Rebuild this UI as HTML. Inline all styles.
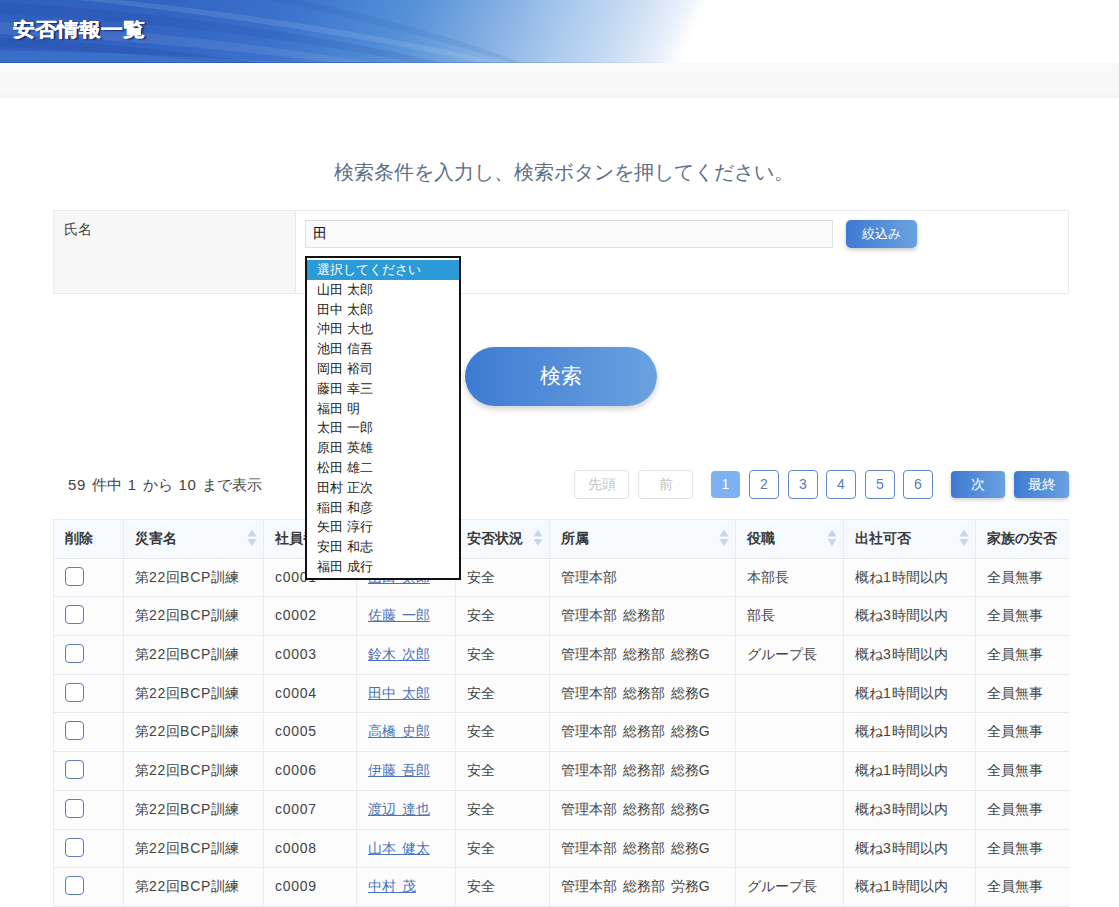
<!DOCTYPE html>
<html><head><meta charset="utf-8">
<style>
*{margin:0;padding:0;box-sizing:border-box}
html,body{width:1119px;height:907px;overflow:hidden;background:#fff}
body{font-family:"Liberation Sans",sans-serif;color:#333;position:relative}
.abs{position:absolute}
#hdr{left:0;top:0;width:1119px;height:63px;overflow:hidden;
 background:linear-gradient(100deg,#3463c2 0px,#3a6fcc 250px,#5a90d8 420px,#9fc0e8 560px,#d6e5f6 650px,#fff 720px)}
#hdr h1{position:absolute;left:13px;top:16px;transform:scale(1,0.87);transform-origin:0 4px;-webkit-text-stroke:0.35px #fff;font-size:22px;font-weight:bold;color:#fff;letter-spacing:0px;
 text-shadow:2px 2px 2px rgba(0,10,60,.75)}
#gray{left:0;top:63px;width:1119px;height:35px;background:linear-gradient(#f9f9f9,#f8f8f8 85%,#f3f3f3)}
#msg{left:0;top:158px;width:1128px;text-align:center;font-size:19.5px;color:#5d6f88;line-height:28px;white-space:nowrap}
#form{left:53px;top:210px;width:1016px;height:84px;border:1px solid #ececec;background:#fff}
#lbl{left:0;top:0;width:242px;height:82px;background:#f7f7f7;border-right:1px solid #ececec}
#lbl span{position:absolute;left:10px;top:10px;font-size:14px;color:#444}
#inp{left:305px;top:220px;width:528px;height:28px;background:#fafafa;border:1px solid #e2e2e2;border-top-color:#d6d6d6}
#inp span{position:absolute;left:7px;top:4px;font-size:14px;color:#111}
.bbtn{background:linear-gradient(90deg,#3e7ad2,#6aa2e0);color:#fff;text-align:center;box-shadow:0 2px 4px rgba(0,0,0,.22)}
#shibori{left:846px;top:220px;width:71px;height:28px;border-radius:5px;font-size:13px;line-height:28px}
#search{left:465px;top:347px;width:192px;height:59px;border-radius:30px;font-size:21px;line-height:57px;box-shadow:0 3px 6px rgba(0,0,0,.18)}
#list{left:305px;top:256px;width:156px;height:324px;border:2px solid #111;background:#fff;overflow:hidden}
#list div{position:absolute;left:0;width:152px;height:19.8px;font-size:13px;line-height:19.8px;padding-left:10px;color:#222;white-space:nowrap}
#list div.sel{background:#2a9bd6;color:#fff}
#count{left:68px;top:474px;font-size:15px;color:#444;line-height:22px;white-space:nowrap;word-spacing:1.6px}
.pb{top:470px;height:29px;border-radius:4px;text-align:center;font-size:14px;line-height:27px}
.pd{border:1px solid #e3e3e3;color:#c4c4c4;width:55px}
.pn{border:1px solid #6389c8;color:#5a7db5;width:30px}
.pa{background:#7db1f4;color:#fff;width:29px;top:471px;height:27px;line-height:27px}
.pg{background:linear-gradient(90deg,#3e7ad2,#6aa2e0);color:#fff;width:54px;top:471px;height:27px;line-height:27px;box-shadow:0 2px 4px rgba(0,0,0,.2)}
#tbl{left:53px;top:519px;width:1016px;height:400px;overflow:hidden}
.hl{position:absolute;left:0;width:1100px;height:1px;background:#e6e9ee}
.vl{position:absolute;top:0;width:1px;height:400px;background:#e9ebef}
.th{position:absolute;top:0;height:39px;line-height:39px;font-size:14px;font-weight:bold;color:#3a3a3a;white-space:nowrap}
.td{position:absolute;font-size:14px;color:#444;white-space:nowrap;word-spacing:2px}
.td a{color:#4a74ba;text-decoration:underline}
.sort{position:absolute}
.l{letter-spacing:0.75px}
.cb{position:absolute;width:19px;height:19px;border:1.5px solid #5a7ec0;border-radius:4px;background:#fff}
</style></head><body>
<div id="hdr" class="abs"><svg width="1119" height="63" style="position:absolute;left:0;top:0">
<defs><linearGradient id="hg" gradientUnits="userSpaceOnUse" x1="42" y1="-190" x2="1077" y2="252">
<stop offset="0" stop-color="#2f5ebe"/><stop offset="0.17" stop-color="#3364c3"/><stop offset="0.27" stop-color="#3b72cc"/><stop offset="0.37" stop-color="#5590d8"/><stop offset="0.435" stop-color="#7eabe1"/><stop offset="0.50" stop-color="#a9c9ed"/><stop offset="0.55" stop-color="#c8dcf2"/><stop offset="0.59" stop-color="#e8f0fa"/><stop offset="0.61" stop-color="#ffffff"/><stop offset="1" stop-color="#ffffff"/></linearGradient></defs>
<rect width="1119" height="63" fill="url(#hg)"/>
<path d="M120 0 Q330 22 500 62 L478 62 Q310 26 80 0Z" fill="#ffffff" opacity="0.10"/>
<path d="M0 2 Q250 18 440 62 L410 62 Q230 26 0 14Z" fill="#102a80" opacity="0.10"/>
<path d="M0 22 Q200 34 370 62 L330 62 Q170 42 0 34Z" fill="#ffffff" opacity="0.08"/>
<path d="M0 50 Q160 54 300 63 L0 63Z" fill="#5aa0f0" opacity="0.22"/><path d="M0 38 Q140 44 260 63 L220 63 Q110 50 0 47Z" fill="#0a2070" opacity="0.10"/>
<path d="M300 0 Q420 25 520 62 L510 62 Q400 28 270 0Z" fill="#1a4aa0" opacity="0.10"/>
<defs><linearGradient id="lg"><stop offset="0" stop-color="#2a4c98" stop-opacity=".55"/><stop offset=".55" stop-color="#2a4c98" stop-opacity=".4"/><stop offset="1" stop-color="#2a4c98" stop-opacity="0"/></linearGradient></defs><rect y="62" width="680" height="1" fill="url(#lg)"/>
</svg><h1>安否情報一覧</h1></div>
<div id="gray" class="abs"></div>
<div id="msg" class="abs">検索条件を入力し、検索ボタンを押してください。</div>
<div id="form" class="abs"><div id="lbl" class="abs"><span>氏名</span></div></div>
<div id="inp" class="abs"><span>田</span></div>
<div id="shibori" class="abs bbtn">絞込み</div>
<div id="search" class="abs bbtn">検索</div>
<div id="count" class="abs"><span class="l">59</span> 件中 <span class="l">1</span> から <span class="l">10</span> まで表示</div>
<div class="abs pb pd" style="left:574px">先頭</div>
<div class="abs pb pd" style="left:638px">前</div>
<div class="abs pb pa" style="left:711px">1</div>
<div class="abs pb pn" style="left:749px">2</div>
<div class="abs pb pn" style="left:788px">3</div>
<div class="abs pb pn" style="left:826px">4</div>
<div class="abs pb pn" style="left:865px">5</div>
<div class="abs pb pn" style="left:903px">6</div>
<div class="abs pb pg" style="left:951px">次</div>
<div class="abs pb pg" style="left:1014px;width:55px">最終</div>
<div id="tbl" class="abs">
<div style="position:absolute;left:0;top:0;width:1100px;height:39px;background:#f6f9fd"></div>
<div style="position:absolute;left:0;top:39px;width:1100px;height:400px;background:#fcfcfc"></div>
<div class="hl" style="top:0"></div>
<div class="hl" style="top:39px"></div>
<div class="hl" style="top:77px"></div>
<div class="hl" style="top:116px"></div>
<div class="hl" style="top:155px"></div>
<div class="hl" style="top:193px"></div>
<div class="hl" style="top:232px"></div>
<div class="hl" style="top:271px"></div>
<div class="hl" style="top:310px"></div>
<div class="hl" style="top:348px"></div>
<div class="hl" style="top:387px"></div>
<div class="hl" style="top:426px"></div>
<div class="vl" style="left:0.0px"></div>
<div class="vl" style="left:70.0px"></div>
<div class="vl" style="left:210.0px"></div>
<div class="vl" style="left:303.0px"></div>
<div class="vl" style="left:402.0px"></div>
<div class="vl" style="left:496.0px"></div>
<div class="vl" style="left:682.0px"></div>
<div class="vl" style="left:790.0px"></div>
<div class="vl" style="left:922.0px"></div>
<div class="th" style="left:12.0px">削除</div>
<div class="th" style="left:82.0px">災害名</div>
<svg class="sort" style="left:194px;top:10px" width="10" height="18" viewBox="0 0 10 18"><path d="M5 0.5L9.5 7.5H0.5Z" fill="#c6d5ea"/><path d="M5 17L9.5 10H0.5Z" fill="#c6d5ea"/></svg>
<div class="th" style="left:222.0px">社員番号</div>
<svg class="sort" style="left:287px;top:10px" width="10" height="18" viewBox="0 0 10 18"><path d="M5 0.5L9.5 7.5H0.5Z" fill="#c6d5ea"/><path d="M5 17L9.5 10H0.5Z" fill="#c6d5ea"/></svg>
<div class="th" style="left:315.0px">氏名</div>
<svg class="sort" style="left:386px;top:10px" width="10" height="18" viewBox="0 0 10 18"><path d="M5 0.5L9.5 7.5H0.5Z" fill="#c6d5ea"/><path d="M5 17L9.5 10H0.5Z" fill="#c6d5ea"/></svg>
<div class="th" style="left:414.0px">安否状況</div>
<svg class="sort" style="left:480px;top:10px" width="10" height="18" viewBox="0 0 10 18"><path d="M5 0.5L9.5 7.5H0.5Z" fill="#c6d5ea"/><path d="M5 17L9.5 10H0.5Z" fill="#c6d5ea"/></svg>
<div class="th" style="left:508.0px">所属</div>
<svg class="sort" style="left:666px;top:10px" width="10" height="18" viewBox="0 0 10 18"><path d="M5 0.5L9.5 7.5H0.5Z" fill="#c6d5ea"/><path d="M5 17L9.5 10H0.5Z" fill="#c6d5ea"/></svg>
<div class="th" style="left:694.0px">役職</div>
<svg class="sort" style="left:774px;top:10px" width="10" height="18" viewBox="0 0 10 18"><path d="M5 0.5L9.5 7.5H0.5Z" fill="#c6d5ea"/><path d="M5 17L9.5 10H0.5Z" fill="#c6d5ea"/></svg>
<div class="th" style="left:802.0px">出社可否</div>
<svg class="sort" style="left:906px;top:10px" width="10" height="18" viewBox="0 0 10 18"><path d="M5 0.5L9.5 7.5H0.5Z" fill="#c6d5ea"/><path d="M5 17L9.5 10H0.5Z" fill="#c6d5ea"/></svg>
<div class="th" style="left:934.0px">家族の安否</div>
<svg class="sort" style="left:1031px;top:10px" width="10" height="18" viewBox="0 0 10 18"><path d="M5 0.5L9.5 7.5H0.5Z" fill="#c6d5ea"/><path d="M5 17L9.5 10H0.5Z" fill="#c6d5ea"/></svg>
<div class="cb" style="left:12.0px;top:47.50px"></div>
<div class="td" style="left:82.0px;top:39.00px;line-height:38px">第<span class="l">22</span>回<span class="l">BCP</span>訓練</div>
<div class="td" style="left:222.0px;top:39.00px;line-height:38px"><span class="l">c0001</span></div>
<div class="td" style="left:315.0px;top:39.00px;line-height:38px"><a>山田 太郎</a></div>
<div class="td" style="left:414.0px;top:39.00px;line-height:38px">安全</div>
<div class="td" style="left:508.0px;top:39.00px;line-height:38px">管理本部</div>
<div class="td" style="left:694.0px;top:39.00px;line-height:38px">本部長</div>
<div class="td" style="left:802.0px;top:39.00px;line-height:38px">概ね<span class="l">1</span>時間以内</div>
<div class="td" style="left:934.0px;top:39.00px;line-height:38px">全員無事</div>
<div class="cb" style="left:12.0px;top:85.50px"></div>
<div class="td" style="left:82.0px;top:77.00px;line-height:39px">第<span class="l">22</span>回<span class="l">BCP</span>訓練</div>
<div class="td" style="left:222.0px;top:77.00px;line-height:39px"><span class="l">c0002</span></div>
<div class="td" style="left:315.0px;top:77.00px;line-height:39px"><a>佐藤 一郎</a></div>
<div class="td" style="left:414.0px;top:77.00px;line-height:39px">安全</div>
<div class="td" style="left:508.0px;top:77.00px;line-height:39px">管理本部 総務部</div>
<div class="td" style="left:694.0px;top:77.00px;line-height:39px">部長</div>
<div class="td" style="left:802.0px;top:77.00px;line-height:39px">概ね<span class="l">3</span>時間以内</div>
<div class="td" style="left:934.0px;top:77.00px;line-height:39px">全員無事</div>
<div class="cb" style="left:12.0px;top:124.50px"></div>
<div class="td" style="left:82.0px;top:116.00px;line-height:39px">第<span class="l">22</span>回<span class="l">BCP</span>訓練</div>
<div class="td" style="left:222.0px;top:116.00px;line-height:39px"><span class="l">c0003</span></div>
<div class="td" style="left:315.0px;top:116.00px;line-height:39px"><a>鈴木 次郎</a></div>
<div class="td" style="left:414.0px;top:116.00px;line-height:39px">安全</div>
<div class="td" style="left:508.0px;top:116.00px;line-height:39px">管理本部 総務部 総務<span class="l">G</span></div>
<div class="td" style="left:694.0px;top:116.00px;line-height:39px">グループ長</div>
<div class="td" style="left:802.0px;top:116.00px;line-height:39px">概ね<span class="l">3</span>時間以内</div>
<div class="td" style="left:934.0px;top:116.00px;line-height:39px">全員無事</div>
<div class="cb" style="left:12.0px;top:163.50px"></div>
<div class="td" style="left:82.0px;top:155.00px;line-height:38px">第<span class="l">22</span>回<span class="l">BCP</span>訓練</div>
<div class="td" style="left:222.0px;top:155.00px;line-height:38px"><span class="l">c0004</span></div>
<div class="td" style="left:315.0px;top:155.00px;line-height:38px"><a>田中 太郎</a></div>
<div class="td" style="left:414.0px;top:155.00px;line-height:38px">安全</div>
<div class="td" style="left:508.0px;top:155.00px;line-height:38px">管理本部 総務部 総務<span class="l">G</span></div>
<div class="td" style="left:694.0px;top:155.00px;line-height:38px"></div>
<div class="td" style="left:802.0px;top:155.00px;line-height:38px">概ね<span class="l">1</span>時間以内</div>
<div class="td" style="left:934.0px;top:155.00px;line-height:38px">全員無事</div>
<div class="cb" style="left:12.0px;top:201.50px"></div>
<div class="td" style="left:82.0px;top:193.00px;line-height:39px">第<span class="l">22</span>回<span class="l">BCP</span>訓練</div>
<div class="td" style="left:222.0px;top:193.00px;line-height:39px"><span class="l">c0005</span></div>
<div class="td" style="left:315.0px;top:193.00px;line-height:39px"><a>高橋 史郎</a></div>
<div class="td" style="left:414.0px;top:193.00px;line-height:39px">安全</div>
<div class="td" style="left:508.0px;top:193.00px;line-height:39px">管理本部 総務部 総務<span class="l">G</span></div>
<div class="td" style="left:694.0px;top:193.00px;line-height:39px"></div>
<div class="td" style="left:802.0px;top:193.00px;line-height:39px">概ね<span class="l">1</span>時間以内</div>
<div class="td" style="left:934.0px;top:193.00px;line-height:39px">全員無事</div>
<div class="cb" style="left:12.0px;top:240.50px"></div>
<div class="td" style="left:82.0px;top:232.00px;line-height:39px">第<span class="l">22</span>回<span class="l">BCP</span>訓練</div>
<div class="td" style="left:222.0px;top:232.00px;line-height:39px"><span class="l">c0006</span></div>
<div class="td" style="left:315.0px;top:232.00px;line-height:39px"><a>伊藤 吾郎</a></div>
<div class="td" style="left:414.0px;top:232.00px;line-height:39px">安全</div>
<div class="td" style="left:508.0px;top:232.00px;line-height:39px">管理本部 総務部 総務<span class="l">G</span></div>
<div class="td" style="left:694.0px;top:232.00px;line-height:39px"></div>
<div class="td" style="left:802.0px;top:232.00px;line-height:39px">概ね<span class="l">1</span>時間以内</div>
<div class="td" style="left:934.0px;top:232.00px;line-height:39px">全員無事</div>
<div class="cb" style="left:12.0px;top:279.50px"></div>
<div class="td" style="left:82.0px;top:271.00px;line-height:39px">第<span class="l">22</span>回<span class="l">BCP</span>訓練</div>
<div class="td" style="left:222.0px;top:271.00px;line-height:39px"><span class="l">c0007</span></div>
<div class="td" style="left:315.0px;top:271.00px;line-height:39px"><a>渡辺 達也</a></div>
<div class="td" style="left:414.0px;top:271.00px;line-height:39px">安全</div>
<div class="td" style="left:508.0px;top:271.00px;line-height:39px">管理本部 総務部 総務<span class="l">G</span></div>
<div class="td" style="left:694.0px;top:271.00px;line-height:39px"></div>
<div class="td" style="left:802.0px;top:271.00px;line-height:39px">概ね<span class="l">3</span>時間以内</div>
<div class="td" style="left:934.0px;top:271.00px;line-height:39px">全員無事</div>
<div class="cb" style="left:12.0px;top:318.50px"></div>
<div class="td" style="left:82.0px;top:310.00px;line-height:38px">第<span class="l">22</span>回<span class="l">BCP</span>訓練</div>
<div class="td" style="left:222.0px;top:310.00px;line-height:38px"><span class="l">c0008</span></div>
<div class="td" style="left:315.0px;top:310.00px;line-height:38px"><a>山本 健太</a></div>
<div class="td" style="left:414.0px;top:310.00px;line-height:38px">安全</div>
<div class="td" style="left:508.0px;top:310.00px;line-height:38px">管理本部 総務部 総務<span class="l">G</span></div>
<div class="td" style="left:694.0px;top:310.00px;line-height:38px"></div>
<div class="td" style="left:802.0px;top:310.00px;line-height:38px">概ね<span class="l">3</span>時間以内</div>
<div class="td" style="left:934.0px;top:310.00px;line-height:38px">全員無事</div>
<div class="cb" style="left:12.0px;top:356.50px"></div>
<div class="td" style="left:82.0px;top:348.00px;line-height:39px">第<span class="l">22</span>回<span class="l">BCP</span>訓練</div>
<div class="td" style="left:222.0px;top:348.00px;line-height:39px"><span class="l">c0009</span></div>
<div class="td" style="left:315.0px;top:348.00px;line-height:39px"><a>中村 茂</a></div>
<div class="td" style="left:414.0px;top:348.00px;line-height:39px">安全</div>
<div class="td" style="left:508.0px;top:348.00px;line-height:39px">管理本部 総務部 労務<span class="l">G</span></div>
<div class="td" style="left:694.0px;top:348.00px;line-height:39px">グループ長</div>
<div class="td" style="left:802.0px;top:348.00px;line-height:39px">概ね<span class="l">1</span>時間以内</div>
<div class="td" style="left:934.0px;top:348.00px;line-height:39px">全員無事</div>
<div class="cb" style="left:12.0px;top:395.50px"></div>
<div class="td" style="left:82.0px;top:387.00px;line-height:39px">第<span class="l">22</span>回<span class="l">BCP</span>訓練</div>
<div class="td" style="left:222.0px;top:387.00px;line-height:39px"><span class="l">c0010</span></div>
<div class="td" style="left:315.0px;top:387.00px;line-height:39px"><a>小林 三郎</a></div>
<div class="td" style="left:414.0px;top:387.00px;line-height:39px">安全</div>
<div class="td" style="left:508.0px;top:387.00px;line-height:39px">管理本部 総務部 労務<span class="l">G</span></div>
<div class="td" style="left:694.0px;top:387.00px;line-height:39px"></div>
<div class="td" style="left:802.0px;top:387.00px;line-height:39px">概ね<span class="l">1</span>時間以内</div>
<div class="td" style="left:934.0px;top:387.00px;line-height:39px">全員無事</div>
</div>
<div id="list" class="abs">
<div class="sel" style="top:2.00px">選択してください</div>
<div style="top:21.80px">山田 太郎</div>
<div style="top:41.60px">田中 太郎</div>
<div style="top:61.40px">沖田 大也</div>
<div style="top:81.20px">池田 信吾</div>
<div style="top:101.00px">岡田 裕司</div>
<div style="top:120.80px">藤田 幸三</div>
<div style="top:140.60px">福田 明</div>
<div style="top:160.40px">太田 一郎</div>
<div style="top:180.20px">原田 英雄</div>
<div style="top:200.00px">松田 雄二</div>
<div style="top:219.80px">田村 正次</div>
<div style="top:239.60px">稲田 和彦</div>
<div style="top:259.40px">矢田 淳行</div>
<div style="top:279.20px">安田 和志</div>
<div style="top:299.00px">福田 成行</div>
</div>


</body></html>
